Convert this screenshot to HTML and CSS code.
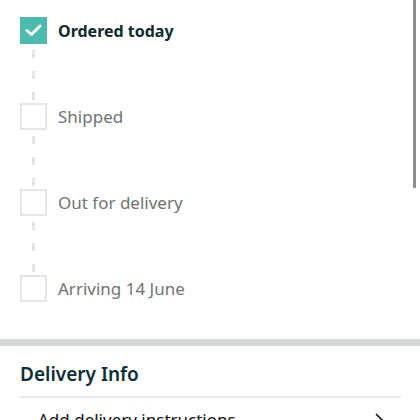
FILE: index.html
```html
<!DOCTYPE html>
<html lang="en">
<head>
	<meta charset="UTF-8">
	<title>Track package</title>
	<link rel="stylesheet" href="styles.css">
</head>
<body>
<div class="page">
	<ul class="steps">
		<li class="step done">
			<span class="box">
				<svg width="17" height="13" viewBox="0 0 17 13"><path d="M2 6.5 L6.5 10.5 L15 2" fill="none" stroke="#fff" stroke-width="3" stroke-linecap="round" stroke-linejoin="round"/></svg>
			</span>
			<span class="label">Ordered today</span>
		</li>
		<li class="link"></li>
		<li class="step">
			<span class="box"></span>
			<span class="label">Shipped</span>
		</li>
		<li class="link"></li>
		<li class="step">
			<span class="box"></span>
			<span class="label">Out for delivery</span>
		</li>
		<li class="link"></li>
		<li class="step">
			<span class="box"></span>
			<span class="label">Arriving 14 June</span>
		</li>
	</ul>

	<div class="sep"></div>

	<div class="info">
		<h2>Delivery Info</h2>
		<div class="row">
			<span>Add delivery instructions</span>
			<svg width="10" height="16" viewBox="0 0 10 16"><path d="M2 2 L8 8 L2 14" fill="none" stroke="#0f1111" stroke-width="1.6"/></svg>
		</div>
	</div>

	<div class="scroll"></div>
</div>
</body>
</html>
```

FILE: styles.css
```css
* {
	margin: 0;
	padding: 0;
}

ul {
	list-style: none;
}

body {
	font-family: "Noto Sans", "Liberation Sans", sans-serif;
	background: #fff;
	color: #0f1111;
	overflow: hidden;
}

.page {
	position: relative;
	width: 420px;
	height: 420px;
	overflow: hidden;
}

.steps {
	padding: 17px 20px 0;
	height: 322px;
}

.step {
	display: flex;
	align-items: center;
	height: 27px;
}

.box {
	width: 27px;
	height: 27px;
	box-sizing: border-box;
	border: 2px solid #e3e6e6;
	display: flex;
	align-items: center;
	justify-content: center;
	flex-shrink: 0;
}

.step.done .box {
	background: #4bbbad;
	border-color: #4bbbad;
}

.label {
	margin-left: 11px;
	font-size: 17px;
	color: #6f7373;
}

.step.done .label {
	font-size: 16px;
	font-weight: bold;
	color: #0f2a2e;
}

.link {
	height: 59px;
	width: 3px;
	margin-left: 12px;
	background: repeating-linear-gradient(to bottom, transparent 0, transparent 6px, #e3e6e6 6px, #e3e6e6 14px, transparent 14px, transparent 21px);
}

.sep {
	height: 7px;
	background: #d5d9d9;
}

.info {
	padding: 15px 19px 0 20px;
}

.info h2 {
	font-size: 19px;
	font-weight: 600;
	color: #0b2f35;
	line-height: 26px;
	padding-bottom: 9px;
	border-bottom: 2px solid #e7e9e9;
}

.row {
	display: flex;
	justify-content: space-between;
	align-items: center;
	padding: 10px 17px 0 18px;
	font-size: 17px;
	line-height: 23px;
}

.scroll {
	position: absolute;
	right: 4px;
	top: 0;
	width: 3px;
	height: 188px;
	background: #8d8d8d;
}
```
